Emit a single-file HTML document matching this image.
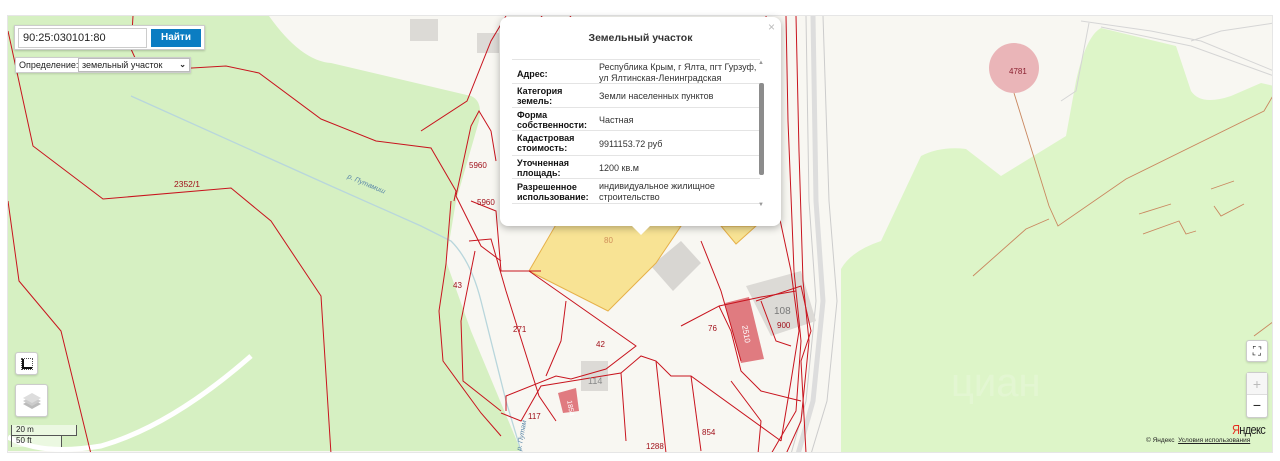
<!DOCTYPE html>
<html><head><meta charset="utf-8"><style>
*{margin:0;padding:0;box-sizing:border-box}
body{width:1280px;height:461px;background:#fff;font-family:"Liberation Sans",sans-serif;position:relative;overflow:hidden}
#map{position:absolute;left:7px;top:15px;width:1266px;height:438px;border:1px solid #e6e6e6;overflow:hidden;background:#f8f7f2}
svg{position:absolute;left:0;top:0}
.abs{position:absolute}
.pop{position:absolute;left:500px;top:17px;width:281px;height:209px;background:#fff;border-radius:8px;box-shadow:0 2px 8px rgba(0,0,0,.3);font-size:9px;color:#222}
.pop .t{position:absolute;top:15px;left:0;width:100%;text-align:center;font-weight:bold;font-size:10.5px;color:#333}
.row{position:absolute;left:12px;width:248px;border-top:1px solid #e4e4e4}
.row b{position:absolute;left:5px;font-weight:bold;font-size:9px;line-height:10px;color:#111}
.row span{position:absolute;left:87px;font-size:9px;line-height:11px;color:#333}
.btn{position:absolute;background:#fff;border:1px solid #ccc;border-radius:3px;box-shadow:0 1px 2px rgba(0,0,0,.15)}
</style></head><body>
<div id="map">
<svg width="1266" height="438" viewBox="7 15 1266 438">
<path d="M7 15 L268 15 Q300 60 330 62 L470 95 Q482 100 478 120 L455 200 L445 260 L470 330 L520 450 L7 450 Z" fill="#d6f0c2"/>
<path d="M840 453 L840 268 Q850 250 880 240 L920 155 Q940 145 965 148 L1000 175 L1065 135 L1075 80 Q1085 35 1100 27 L1175 45 L1190 90 Q1200 105 1230 95 L1260 82 L1273 85 L1273 453 Z" fill="#ddf5c8"/>
<path d="M7 436 Q40 455 100 445 Q170 425 250 355" stroke="#fff" stroke-width="5" fill="none"/>
<path d="M130 95 L330 185 L420 225 L450 240 Q470 260 480 300 L505 400 L520 450" stroke="#b8d6dc" stroke-width="1.3" fill="none"/>
<path d="M805 15 L808 200 L815 300 L805 400 L790 453" stroke="#ccc" stroke-width="1" fill="none"/>
<path d="M812 15 L815 200 L822 300 L812 400 L797 453" stroke="#ddd" stroke-width="5" fill="none"/>
<path d="M822 15 L828 200 L836 300 L826 400 L810 453" stroke="#ccc" stroke-width="1" fill="none"/>
<path d="M1080 20 L1150 30 L1200 40 L1273 70 M1100 26 L1190 45 L1273 75 M1190 40 L1220 30 L1273 22 M1088 22 L1075 90 L1060 100" stroke="#d5d5d5" stroke-width="1" fill="none"/>
<rect x="409" y="18" width="28" height="22" fill="#dcdad6"/>
<rect x="476" y="32" width="22" height="20" fill="#dcdad6"/>
<path d="M650 265 L680 240 L700 262 L672 290 Z" fill="#d8d6d2"/>
<path d="M745 285 L800 270 L815 320 L770 335 Z" fill="#dcdad6"/>
<rect x="580" y="360" width="27" height="30" fill="#dcdad6"/>
<path d="M528 270 L560 215 L680 225 L655 262 L607 310 Z" fill="#f8e394" stroke="#e6b14a" stroke-width="1"/>
<path d="M720 225 L755 225 L735 243 Z" fill="#f8e394" stroke="#e6b14a" stroke-width="1"/>
<path d="M724 302 L748 296 L763 358 L740 362 Z" fill="#e07b80"/>
<path d="M557 392 L575 387 L578 410 L562 412 Z" fill="#e07b80"/>
<circle cx="1013" cy="67" r="25" fill="#eab5b8"/>
<g stroke="#c8141e" stroke-width="1" fill="none">
<path d="M7 30 L32 145 L102 198 L230 187 L270 220 L320 295 L330 453"/>
<path d="M7 200 L18 280 L60 330 L90 453"/>
<path d="M132 15 L130 48 L140 70 L225 65 L258 72 L320 118 L375 140 L430 147 L455 190 L453 200"/>
<path d="M420 130 L466 100 L490 40 L505 15"/>
<path d="M455 195 L470 125 L478 110 L490 130 L495 160"/>
<path d="M455 195 L480 245 L500 260"/>
<path d="M450 200 L445 263 L438 310 L442 360 L480 412 L500 435"/>
<path d="M470 200 L495 210 L500 270 L540 270"/>
<path d="M468 240 L490 238 L505 290 L538 395 L555 420"/>
<path d="M474 250 L460 320 L462 380 L500 410"/>
<path d="M528 270 L635 345 L605 368 L570 378 L555 375 L505 395 L505 410"/>
<path d="M565 300 L560 340 L545 375"/>
<path d="M500 412 L520 420 L540 385 L620 372 L625 440"/>
<path d="M620 372 L640 355 L655 360 L670 375 L690 375 L780 440"/>
<path d="M655 360 L665 452"/>
<path d="M690 375 L700 450"/>
<path d="M680 325 L718 305 L730 330 L740 370 L760 390 L800 400"/>
<path d="M718 305 L760 296 L795 290"/>
<path d="M700 240 L720 290 L740 360"/>
<path d="M730 380 L760 420 L757 453"/>
<path d="M755 300 L800 285 L810 330 L800 360 L805 452"/>
<path d="M765 15 L770 60 L768 130 L775 200 L790 270 L798 330 L790 380 L780 440"/>
<path d="M785 15 L787 120 L793 270 L800 340 L795 410 L770 453"/>
<path d="M795 15 L798 150 L802 280 L808 340 L800 420 L785 453"/>
<path d="M760 300 L775 340 L790 345"/>
<path d="M540 15 L555 30 L570 15"/>
</g>
<g stroke="#c9875f" stroke-width="0.9" fill="none">
<path d="M1013 92 L1048 205 L1057 225 L1125 178 L1263 110 L1273 93"/>
<path d="M972 275 L1025 228 L1048 218"/>
<path d="M1138 213 L1170 203 M1142 233 L1178 220 L1185 233 L1195 230 M1210 188 L1233 180 M1213 205 L1220 215 L1243 203 M1253 335 L1273 320"/>
</g>
<g font-family="Liberation Sans" font-size="8" fill="#a0101a">
<text x="173" y="186" font-size="8.5">2352/1</text>
<text x="468" y="167">5960</text>
<text x="476" y="204">5960</text>
<text x="452" y="287">43</text>
<text x="512" y="331">271</text>
<text x="595" y="346">42</text>
<text x="707" y="330">76</text>
<text x="776" y="327">900</text>
<text x="527" y="418">117</text>
<text x="645" y="448">1288</text>
<text x="701" y="434">854</text>
<text x="603" y="242" fill="#d08f5a">80</text>
<text x="1008" y="73" fill="#8a2030">4781</text>
<text x="735" y="328" transform="rotate(80 740 330)" fill="#fff">2510</text>
<text x="560" y="403" transform="rotate(80 565 405)" fill="#fff" font-size="7">1854</text>
</g>
<text x="773" y="313" font-family="Liberation Sans" font-size="10" fill="#777">108</text>
<text x="587" y="383" font-family="Liberation Sans" font-size="9" fill="#888">114</text>
<text x="346" y="177" transform="rotate(23 346 177)" font-family="Liberation Sans" font-size="7" fill="#5a86a8" font-style="italic">р. Путамиш</text>
<text x="520" y="450" transform="rotate(-80 520 450)" font-family="Liberation Sans" font-size="7" fill="#5a86a8" font-style="italic">р. Путам</text>
<text x="950" y="395" font-family="Liberation Sans" font-size="40" fill="#fff" opacity=".18">циан</text>
</svg>
</div>

<div class="abs" style="left:14px;top:25px;width:191px;height:25px;background:#fff;border:1px solid #ccc;box-shadow:0 1px 2px rgba(0,0,0,.2)"></div>
<div class="abs" style="left:18px;top:28px;width:129px;height:20px;border:1px solid #ccc;background:#fff;font-size:11px;line-height:18px;padding-left:4px;color:#222">90:25:030101:80</div>
<div class="abs" style="left:151px;top:29px;width:50px;height:18px;background:#0b7dc2;color:#fff;font-size:10px;font-weight:bold;text-align:center;line-height:18px">Найти</div>
<div class="abs" style="left:15px;top:57px;width:176px;height:16px;background:#fff;border:1px solid #ccc;box-shadow:0 1px 2px rgba(0,0,0,.15);font-size:9px;line-height:14px;padding-left:3px;color:#222">Определение:</div>
<div class="abs" style="left:78px;top:58px;width:112px;height:14px;border:1px solid #bbb;background:#fff;font-size:9px;line-height:12px;padding-left:3px;color:#222">земельный участок<span style="position:absolute;right:3px;top:0;font-size:8px;font-weight:bold">&#8964;</span></div>

<div class="pop">
<div class="abs" style="right:6px;top:3px;color:#bbb;font-size:12px">×</div>
<div class="t">Земельный участок</div>
<div class="row" style="top:42px"><b style="top:9px">Адрес:</b><span style="top:2px">Республика Крым, г Ялта, пгт Гурзуф,<br>ул Ялтинская-Ленинградская</span></div>
<div class="row" style="top:66px"><b style="top:2px">Категория<br>земель:</b><span style="top:7px">Земли населенных пунктов</span></div>
<div class="row" style="top:90px"><b style="top:2px">Форма<br>собственности:</b><span style="top:7px">Частная</span></div>
<div class="row" style="top:113px"><b style="top:2px">Кадастровая<br>стоимость:</b><span style="top:8px">9911153.72 руб</span></div>
<div class="row" style="top:138px"><b style="top:2px">Уточненная<br>площадь:</b><span style="top:7px">1200 кв.м</span></div>
<div class="row" style="top:161px"><b style="top:3px">Разрешенное<br>использование:</b><span style="top:2px">индивидуальное жилищное<br>строительство</span></div>
<div class="row" style="top:186px"></div>
<div class="abs" style="left:258px;top:43px;font-size:6px;color:#999">▲</div>
<div class="abs" style="left:259px;top:66px;width:5px;height:92px;background:#8c8c8c;border-radius:2px"></div>
<div class="abs" style="left:258px;top:185px;font-size:6px;color:#999">▼</div>
</div>
<div class="abs" style="left:631px;top:225px;width:0;height:0;border-left:10px solid transparent;border-right:10px solid transparent;border-top:10px solid #fff"></div>

<div class="btn" style="left:15px;top:352px;width:23px;height:23px"><div class="abs" style="left:6px;top:6px;width:10px;height:10px;border:2px solid #111;border-width:0 0 2px 2px;background:#fff;outline:1px dotted #555"></div></div>
<div class="btn" style="left:15px;top:384px;width:33px;height:33px"><svg width="33" height="33"><path d="M7 19 L16 14 L25 19 L16 24 Z" fill="#bbb"/><path d="M7 16 L16 11 L25 16 L16 21 Z" fill="#ccc"/><path d="M7 13 L16 8 L25 13 L16 18 Z" fill="#ddd"/></svg></div>
<div class="abs" style="left:11px;top:425px;width:66px;height:11px;border:1px solid #555;border-top:none;background:rgba(255,255,255,.5);font-size:8px;line-height:10px;padding-left:4px;color:#222">20 m</div>
<div class="abs" style="left:11px;top:436px;width:51px;height:11px;border-left:1px solid #555;border-right:1px solid #555;font-size:8px;line-height:10px;padding-left:4px;color:#222;background:rgba(255,255,255,.5)">50 ft</div>

<div class="btn" style="left:1246px;top:340px;width:22px;height:22px;font-size:12px;text-align:center;line-height:20px;color:#222">⛶</div>
<div class="btn" style="left:1246px;top:372px;width:22px;height:46px"><div style="height:22px;text-align:center;line-height:22px;color:#bbb;font-size:14px;border-bottom:1px solid #ddd;background:#f6f6f6">+</div><div style="text-align:center;line-height:20px;font-size:14px;color:#222">−</div></div>
<div class="abs" style="left:1232px;top:422px;font-size:13px;letter-spacing:-0.8px;color:#222;transform:scaleX(0.85);transform-origin:left"><span style="color:#e52b1e">Я</span>ндекс</div>
<div class="abs" style="left:1146px;top:437px;font-size:6.5px;color:#222">© Яндекс &nbsp;<u>Условия использования</u></div>
</body></html>
